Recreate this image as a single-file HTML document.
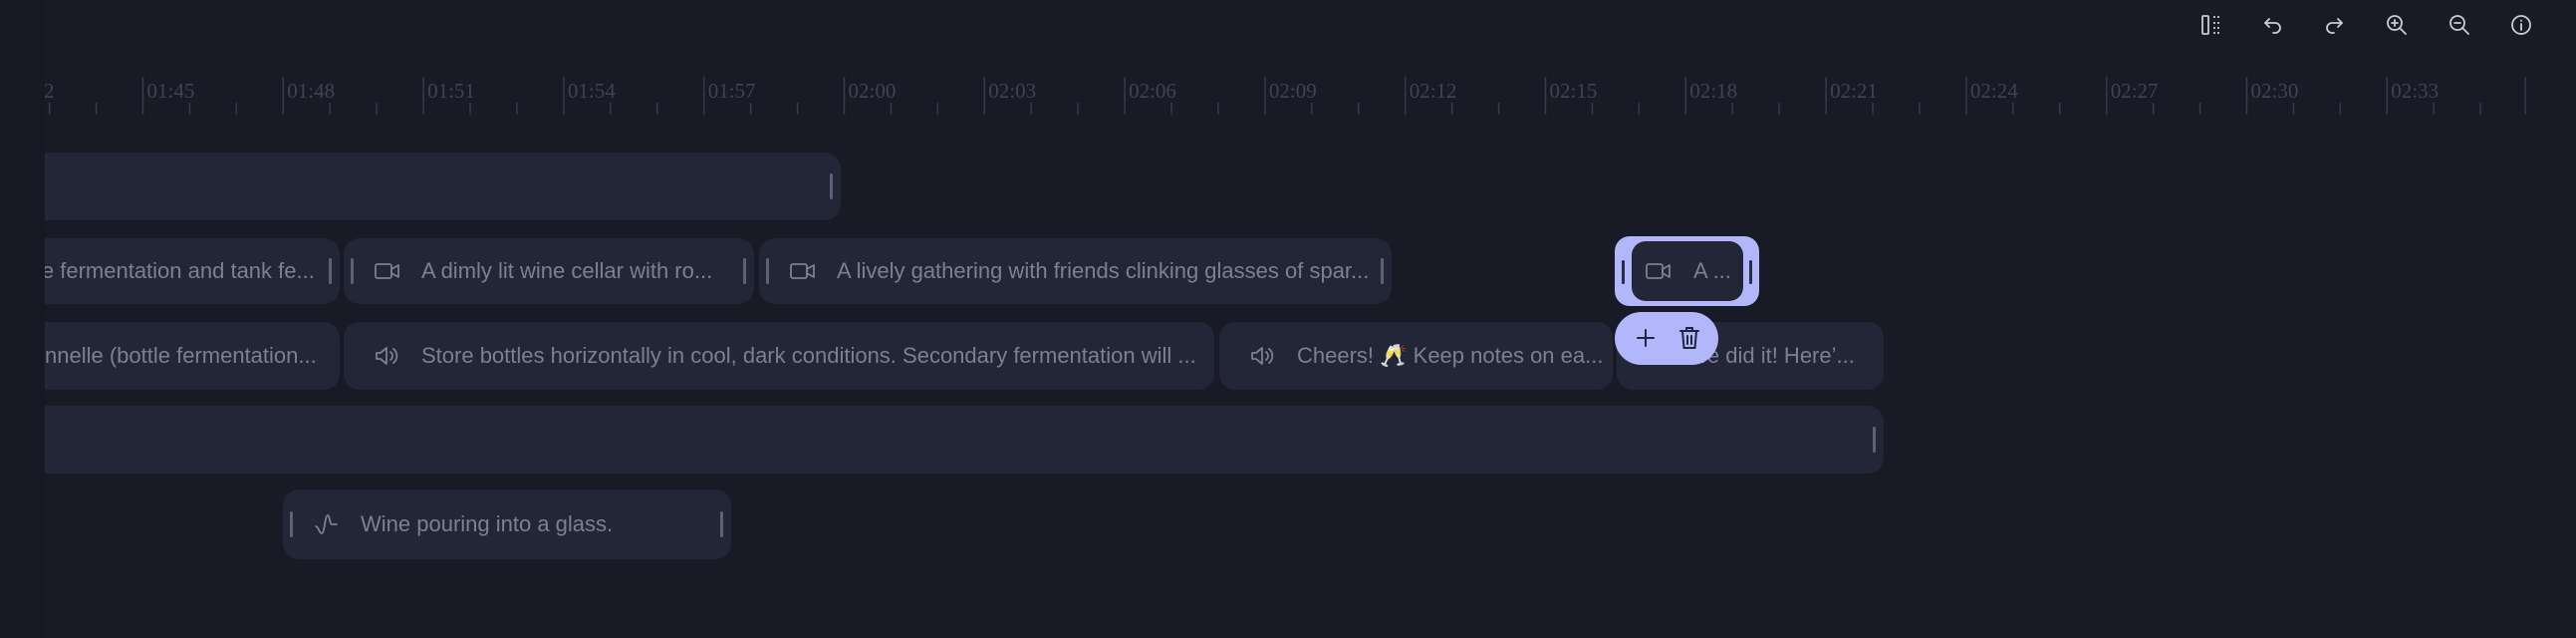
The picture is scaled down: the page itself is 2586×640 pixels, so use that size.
<!DOCTYPE html>
<html><head><meta charset="utf-8"><style>
*{margin:0;padding:0;box-sizing:border-box}
body{width:2586px;height:640px;background:#181a26;overflow:hidden;position:relative;font-family:"Liberation Sans","Noto Sans CJK JP",sans-serif}
.strip{position:absolute;left:0;top:0;width:45px;height:640px;background:#161823}
.tl{position:absolute;left:0;top:0;width:2586px;height:640px}
.clipwrap{position:absolute;left:45px;top:0;width:2541px;height:640px;overflow:hidden}
.c{position:absolute;background:#222636;border-radius:16px;color:#7b8092;font-size:22px;white-space:nowrap;overflow:hidden;display:flex;align-items:center}
.h{position:absolute;top:50%;width:3px;height:26px;margin-top:-13px;background:#5d6273;border-radius:2px}
.hl{left:7px}.hr{right:8px}
.ic{position:absolute;left:31px;top:50%;margin-top:-12px;width:26px;height:24px}
.t{position:absolute;left:78px}
.tb{position:absolute;top:13px;width:24px;height:24px}
</style></head><body>
<div class="strip"></div>
<div style="position:absolute;left:45px;top:0;width:2541px;height:130px;overflow:hidden">
<svg style="position:absolute;left:-45px;top:0" width="2586" height="130" id="ruler"></svg>
</div>

<svg class="tb" style="left:2208px" viewBox="0 0 24 24" fill="none" stroke="#c9ccd6" stroke-width="1.8"><rect x="3" y="3" width="6" height="18" rx="1"/><path d="M15 3v2M15 9v2M15 14v2M15 19v2M19 3v2M19 9v2M19 14v2M19 19v2"/></svg>
<svg class="tb" style="left:2270px" viewBox="0 0 24 24" fill="none" stroke="#c9ccd6" stroke-width="1.8" stroke-linecap="round" stroke-linejoin="round"><path d="M8 6L4 10l4 4"/><path d="M4 10h10a5 5 0 0 1 0 10h-2"/></svg>
<svg class="tb" style="left:2331px" viewBox="0 0 24 24" fill="none" stroke="#c9ccd6" stroke-width="1.8" stroke-linecap="round" stroke-linejoin="round"><path d="M16 6l4 4-4 4"/><path d="M20 10H10a5 5 0 0 0 0 10h2"/></svg>
<svg class="tb" style="left:2394px" viewBox="0 0 24 24" fill="none" stroke="#c9ccd6" stroke-width="1.8" stroke-linecap="round"><circle cx="10" cy="10" r="7"/><path d="M15 15l6 6M10 7v6M7 10h6"/></svg>
<svg class="tb" style="left:2457px" viewBox="0 0 24 24" fill="none" stroke="#c9ccd6" stroke-width="1.8" stroke-linecap="round"><circle cx="10" cy="10" r="7"/><path d="M15 15l6 6M7 10h6"/></svg>
<svg class="tb" style="left:2519px" viewBox="0 0 24 24" fill="none" stroke="#c9ccd6" stroke-width="1.8" stroke-linecap="round"><circle cx="12" cy="12" r="9"/><path d="M12 11v6M12 7.5v.5"/></svg>

<div class="clipwrap">
<div class="c" style="left:-30px;top:153px;width:829px;height:68px"><div class="h hr"></div></div>
<div class="c" style="left:-30px;top:239px;width:326px;height:66px"><span class="t" style="left:22px">le fermentation and tank fe...</span><div class="h hr"></div></div>
<div class="c" style="left:300px;top:239px;width:412px;height:66px"><div class="h hl"></div>
<svg class="ic" viewBox="0 0 26 24" fill="none" stroke="#7b8092" stroke-width="1.8" stroke-linejoin="round"><rect x="1" y="5" width="16" height="14" rx="2"/><path d="M17 10l7-4v12l-7-4z"/></svg>
<span class="t">A dimly lit wine cellar with ro...</span><div class="h hr"></div></div>
<div class="c" style="left:717px;top:239px;width:635px;height:66px"><div class="h hl"></div>
<svg class="ic" viewBox="0 0 26 24" fill="none" stroke="#7b8092" stroke-width="1.8" stroke-linejoin="round"><rect x="1" y="5" width="16" height="14" rx="2"/><path d="M17 10l7-4v12l-7-4z"/></svg>
<span class="t">A lively gathering with friends clinking glasses of spar...</span><div class="h hr"></div></div>
<div class="c" style="left:-30px;top:323px;width:326px;height:68px"><span class="t" style="left:30px">nnelle (bottle fermentation...</span></div>
<div class="c" style="left:300px;top:323px;width:874px;height:68px">
<svg class="ic" viewBox="0 0 26 24" fill="none" stroke="#7b8092" stroke-width="1.8" stroke-linejoin="round" stroke-linecap="round"><path d="M2 9h4l6-5v16l-6-5H2z"/><path d="M16 8a5 5 0 0 1 0 8M19 5a9 9 0 0 1 0 14"/></svg>
<span class="t">Store bottles horizontally in cool, dark conditions. Secondary fermentation will ...</span></div>
<div class="c" style="left:1179px;top:323px;width:395px;height:68px">
<svg class="ic" viewBox="0 0 26 24" fill="none" stroke="#7b8092" stroke-width="1.8" stroke-linejoin="round" stroke-linecap="round"><path d="M2 9h4l6-5v16l-6-5H2z"/><path d="M16 8a5 5 0 0 1 0 8M19 5a9 9 0 0 1 0 14"/></svg>
<span class="t">Cheers! 🥂 Keep notes on ea...</span></div>
<div class="c" style="left:1578px;top:323px;width:268px;height:68px"><span class="t" style="left:75px">we did it! Here’...</span></div>
<div class="c" style="left:-30px;top:407px;width:1876px;height:68px"><div class="h hr"></div></div>
<div class="c" style="left:239px;top:491px;width:450px;height:70px"><div class="h hl"></div>
<svg class="ic" viewBox="0 0 26 24" fill="none" stroke="#7b8092" stroke-width="1.8" stroke-linecap="round" stroke-linejoin="round"><path d="M2 14c3 0 3 7 6 7s3-18 6-18c2 0 2 9 4 9h5"/></svg>
<span class="t">Wine pouring into a glass.</span><div class="h hr"></div></div>
<div style="position:absolute;left:1576px;top:237px;width:145px;height:70px;background:#b3b6fb;border-radius:15px">
<div style="position:absolute;left:7px;top:24px;width:3px;height:24px;background:#2a2d40;border-radius:2px"></div>
<div style="position:absolute;right:7px;top:24px;width:3px;height:24px;background:#2a2d40;border-radius:2px"></div>
<div style="position:absolute;left:17px;top:5px;width:112px;height:60px;background:#222636;border-radius:14px;color:#7b8092;font-size:22px">
<svg style="position:absolute;left:14px;top:18px" width="26" height="24" viewBox="0 0 26 24" fill="none" stroke="#7b8092" stroke-width="1.8" stroke-linejoin="round"><rect x="1" y="5" width="16" height="14" rx="2"/><path d="M17 10l7-4v12l-7-4z"/></svg>
<span style="position:absolute;left:62px;top:17px">A ...</span></div></div>
<div style="position:absolute;left:1576px;top:313px;width:104px;height:53px;background:#b3b6fb;border-radius:27px">
<svg style="position:absolute;left:20px;top:15px" width="22" height="22" viewBox="0 0 22 22" stroke="#22253a" stroke-width="2" stroke-linecap="round"><path d="M11 3v16M3 11h16"/></svg>
<svg style="position:absolute;left:64px;top:13px" width="22" height="26" viewBox="0 0 22 26" fill="none" stroke="#22253a" stroke-width="2" stroke-linecap="round" stroke-linejoin="round"><path d="M2 6h18M8 6V3h6v3M4 6l1.5 17h11L18 6M9 11v8M13 11v8"/></svg>
</div>
</div>
<script>
var s=document.getElementById('ruler'),h='';
var labels=['01:42','01:45','01:48','01:51','01:54','01:57','02:00','02:03','02:06','02:09','02:12','02:15','02:18','02:21','02:24','02:27','02:30','02:33'];
for(var i=0;i<labels.length;i++){var x=2.7+i*140.8;
h+='<line x1="'+x+'" y1="77" x2="'+x+'" y2="115" stroke="#363a49" stroke-width="1.5"/>';
h+='<text x="'+(x+4)+'" y="98" font-family="Liberation Serif,serif" font-size="21" fill="#3f4353">'+labels[i]+'</text>';
for(var k=1;k<3;k++){var m=x+k*46.93;h+='<line x1="'+m+'" y1="103" x2="'+m+'" y2="115" stroke="#363a49" stroke-width="1.5"/>';}}
h+='<line x1="2535" y1="77" x2="2535" y2="115" stroke="#363a49" stroke-width="1.5"/>';
s.innerHTML=h;
</script>
</body></html>
